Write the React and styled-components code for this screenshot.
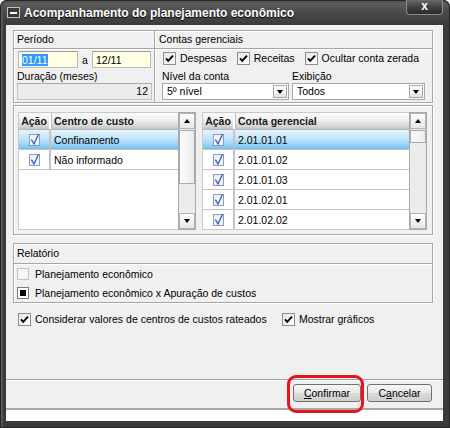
import React from 'react';
import styled, { createGlobalStyle } from 'styled-components';

const GlobalStyle = createGlobalStyle`
  html, body { margin: 0; padding: 0; background: #ffffff; }
  body {
    font-family: "Liberation Sans", Arial, sans-serif;
    font-size: 10.5px;
    color: #000;
  }
  * { box-sizing: border-box; }
`;

const Window = styled.div`
  width: 450px;
  height: 428px;
  display: flex;
  flex-direction: column;
  padding: 0 7px 7px 6px;
  border-radius: 7px 7px 0 0;
  background: linear-gradient(#666 0px, #4a4a4a 12px, #3b3b3b 25px, #3b3b3b 100%);
  box-shadow: inset 0 0 0 1px #262626, inset 1px 1px 0 2px #555;
`;

const TitleBar = styled.div`
  height: 25px;
  display: flex;
  align-items: center;
  color: #fff;
`;

const TitleIcon = styled.span`
  width: 13px;
  height: 11px;
  margin: 0 0 0 1px;
  border: 1px solid #c4c4c4;
  background: #3a3a3a;
  display: flex;
  align-items: center;
  justify-content: center;
  &::before {
    content: '';
    width: 7px;
    height: 2px;
    background: #fff;
  }
`;

const Title = styled.span`
  margin-left: 4px;
  font-size: 12px;
  font-weight: bold;
  text-shadow: 0 1px 1px #000;
`;

const CloseButton = styled.span`
  margin-left: auto;
  align-self: flex-start;
  width: 37px;
  height: 15px;
  border: 1px solid #8c8c8c;
  border-top: none;
  border-radius: 0 0 4px 4px;
  background: linear-gradient(#6a6a6a, #404040 50%, #2c2c2c);
  color: #fff;
  font-weight: bold;
  font-size: 12px;
  line-height: 12px;
  text-align: center;
`;

const Body = styled.div`
  flex: 1;
  display: flex;
  flex-direction: column;
  background: #f0f0f0;
`;

const Main = styled.div`
  flex: 1;
  padding: 5px 10px 0 7px;
  display: flex;
  flex-direction: column;
`;

const Group = styled.div`
  border: 1px solid #a6a6a6;
  box-shadow: inset 1px 1px 0 #fff, 1px 1px 0 #fff;
  margin-top: ${p => p.$top || 0}px;
  height: ${p => p.$h}px;
`;

const TopGroup = styled(Group)`
  display: grid;
  grid-template-columns: 141px 1fr;
`;

const Section = styled.div`
  display: flex;
  flex-direction: column;
  border-right: ${p => (p.$divider ? '1px solid #a6a6a6' : 'none')};
  box-shadow: ${p => (p.$divider ? '1px 0 0 #fff' : 'none')};
`;

const SectionHeader = styled.div`
  height: 18px;
  line-height: 17px;
  padding-left: ${p => p.$pad || 3}px;
  border-bottom: 1px solid #a6a6a6;
  box-shadow: 0 1px 0 #fff;
`;

const PeriodBody = styled.div`
  padding: 2px 0 0 3px;
`;

const InputRow = styled.div`
  display: flex;
  align-items: center;
  height: 17px;
  margin-left: 1px;
`;

const DateInput = styled.div`
  width: ${p => p.$w}px;
  height: 17px;
  border: 1px solid #b9b9b9;
  border-top-color: #9c9c9c;
  background: #ffffe3;
  padding: 2px 0 0 3px;
  line-height: 12px;
`;

const Selected = styled.span`
  background: #3399ff;
  color: #fff;
`;

const Sep = styled.span`
  width: 14px;
  text-align: center;
`;

const FieldLabel = styled.div`
  height: 14px;
  line-height: 14px;
  margin-top: ${p => p.$top || 0}px;
`;

const ReadOnly = styled.div`
  width: 135px;
  height: 17px;
  border: 1px solid #c2c2c2;
  border-top-color: #a8a8a8;
  background: #ebebeb;
  text-align: right;
  padding-right: 3px;
  line-height: 15px;
`;

const ContasBody = styled.div`
  padding: 3px 0 0 7px;
`;

const CheckRow = styled.div`
  display: flex;
  gap: 10px;
  height: 13px;
  padding-left: 1px;
`;

const CheckItem = styled.label`
  display: flex;
  align-items: center;
  gap: 4px;
  height: 13px;
  line-height: 13px;
  white-space: nowrap;
`;

const SelectGrid = styled.div`
  display: grid;
  grid-template-columns: 127px 133px;
  column-gap: 3px;
  margin-top: 4px;
`;

const Select = styled.div`
  position: relative;
  height: 17px;
  border: 1px solid #a9a9a9;
  background: #fff;
  padding-left: 4px;
  line-height: 15px;
`;

const DropButton = styled.span`
  position: absolute;
  right: 1px;
  top: 1px;
  width: 14px;
  height: 13px;
  border: 1px solid #a8a8a8;
  background: linear-gradient(#ffffff, #e4e4e4);
  display: flex;
  align-items: center;
  justify-content: center;
  &::before {
    content: '';
    border-left: 3.5px solid transparent;
    border-right: 3.5px solid transparent;
    border-top: 4px solid #000;
  }
`;

const TablesGroup = styled(Group)`
  display: flex;
  gap: 6px;
  padding: 6px 0 0 4px;
`;

const TableWrap = styled.div`
  width: ${p => p.$w}px;
  height: 118px;
  display: flex;
`;

const Grid = styled.div`
  flex: 1;
  background: #fff;
  border: 1px solid #c9c9c9;
  border-right: none;
  overflow: hidden;
`;

const HeaderRow = styled.div`
  display: flex;
  height: 17px;
  background: linear-gradient(#fbfbfb 0%, #eeeeee 45%, #d4d4d4 85%, #c2c2c2 100%);
  border-bottom: 1px solid #b8b8b8;
  font-weight: bold;
  color: #1a1a1a;
`;

const Row = styled.div`
  display: flex;
  height: 20px;
  border-bottom: 1px solid #c4c4c4;
  background: ${p =>
    p.$selected
      ? 'linear-gradient(#e4f3fd 0%, #c2e5fa 45%, #94d2f6 80%, #6fbef0 100%)'
      : '#fff'};
`;

const ActionCell = styled.div`
  width: 32px;
  flex: none;
  display: flex;
  align-items: center;
  justify-content: center;
  border-right: 2px solid ${p => (p.$head ? '#ffffff' : '#c4c4c4')};
  box-shadow: ${p => (p.$head ? '1px 0 0 #bdbdbd' : 'none')};
`;

const NameCell = styled.div`
  flex: 1;
  display: flex;
  align-items: center;
  padding-left: 3px;
  white-space: nowrap;
`;

const ScrollBar = styled.div`
  width: 18px;
  border: 1px solid #a9a9a9;
  background: #ececec;
  display: flex;
  flex-direction: column;
`;

const ScrollButton = styled.div`
  height: 16px;
  flex: none;
  border: 1px solid #b3b3b3;
  background: linear-gradient(#ffffff, #e6e6e6);
  display: flex;
  align-items: center;
  justify-content: center;
  margin-top: ${p => (p.$down ? 'auto' : '0')};
  &::before {
    content: '';
    border-left: 3.5px solid transparent;
    border-right: 3.5px solid transparent;
    ${p => (p.$down ? 'border-top: 4px solid #000;' : 'border-bottom: 4px solid #000;')}
  }
`;

const Thumb = styled.div`
  height: ${p => p.$h}px;
  margin-top: 1px;
  flex: none;
  border: 1px solid #a8a8a8;
  background: linear-gradient(90deg, #fdfdfd, #ebebeb);
`;

const ReportGroup = styled(Group)`
  display: flex;
  flex-direction: column;
`;

const ReportHeader = styled(SectionHeader)`
  height: 20px;
  line-height: 19px;
`;

const OptionRow = styled.div`
  height: 19px;
  display: flex;
  align-items: center;
  padding-left: 3px;
  gap: 6px;
`;

const OptionBox = styled.span`
  width: 12px;
  height: 12px;
  border: 1px solid ${p => (p.$on ? '#7a7a7a' : '#c3c3c3')};
  background: ${p => (p.$on ? '#fff' : '#f7f7f7')};
  display: flex;
  align-items: center;
  justify-content: center;
  &::before {
    content: '';
    width: 6px;
    height: 6px;
    background: ${p => (p.$on ? '#000' : 'transparent')};
  }
`;

const BottomOptions = styled.div`
  display: grid;
  grid-template-columns: 264px auto;
  margin-top: 10px;
  padding-left: 5px;
`;

const Footer = styled.div`
  height: 29px;
  border-top: 1px solid #a3a3a3;
  box-shadow: inset 0 1px 0 #fff;
  display: flex;
  justify-content: flex-end;
  align-items: flex-start;
  gap: 6px;
  padding: 4px 11px 0 0;
`;

const Highlight = styled.div`
  position: relative;
  &::after {
    content: '';
    position: absolute;
    left: -6px;
    right: -3px;
    top: -9px;
    bottom: -11px;
    border: 3px solid #e8141b;
    border-radius: 9px;
    z-index: 2;
    pointer-events: none;
  }
`;

const Button = styled.button`
  width: ${p => p.$w}px;
  height: 18px;
  padding: 0;
  border: 1px solid #707070;
  border-radius: 3px;
  background: linear-gradient(#f6f6f6, #e8e8e8 50%, #d9d9d9 51%, #cfcfcf);
  font: inherit;
  color: #000;
  & u { text-decoration: underline; }
`;

const StatusBar = styled.div`
  height: 13px;
  border-top: 2px solid #a9a9a9;
  background: #fff;
`;

const Check = () => (
  <svg width="13" height="13" viewBox="0 0 13 13">
    <defs>
      <linearGradient id="cb" x1="0" y1="0" x2="1" y2="1">
        <stop offset="0" stopColor="#e6e6e6" />
        <stop offset="1" stopColor="#ffffff" />
      </linearGradient>
    </defs>
    <rect x="0.5" y="0.5" width="12" height="12" fill="url(#cb)" stroke="#8e8f8f" />
    <path d="M3 6.3 L5.2 8.8 L10 3.6" fill="none" stroke="#000" strokeWidth="1.9" />
  </svg>
);

const GridCheck = () => (
  <svg width="13" height="13" viewBox="0 0 13 13">
    <rect x="1.5" y="1.5" width="10" height="11" fill="#eef2fa" stroke="#8c9cbf" />
    <path d="M3.4 6.6 L6 11 L10.6 1.2" fill="none" stroke="#3550c2" strokeWidth="1.2" />
  </svg>
);

const DataTable = ({ width, title, rows, thumb }) => (
  <TableWrap $w={width}>
    <Grid>
      <HeaderRow>
        <ActionCell $head>Ação</ActionCell>
        <NameCell>{title}</NameCell>
      </HeaderRow>
      {rows.map((r, i) => (
        <Row key={r} $selected={i === 0}>
          <ActionCell>
            <GridCheck />
          </ActionCell>
          <NameCell>{r}</NameCell>
        </Row>
      ))}
    </Grid>
    <ScrollBar>
      <ScrollButton />
      <Thumb $h={thumb} />
      <ScrollButton $down />
    </ScrollBar>
  </TableWrap>
);

const App = () => (
  <>
    <GlobalStyle />
    <Window>
      <TitleBar>
        <TitleIcon />
        <Title>Acompanhamento do planejamento econômico</Title>
        <CloseButton>x</CloseButton>
      </TitleBar>
      <Body>
        <Main>
          <TopGroup $top={0} $h={73}>
            <Section $divider>
              <SectionHeader>Período</SectionHeader>
              <PeriodBody>
                <InputRow>
                  <DateInput $w={60}><Selected>01/11</Selected></DateInput>
                  <Sep>a</Sep>
                  <DateInput $w={59}>12/11</DateInput>
                </InputRow>
                <FieldLabel $top={1}>Duração (meses)</FieldLabel>
                <ReadOnly>12</ReadOnly>
              </PeriodBody>
            </Section>
            <Section>
              <SectionHeader $pad={4}>Contas gerenciais</SectionHeader>
              <ContasBody>
                <CheckRow>
                  <CheckItem><Check />Despesas</CheckItem>
                  <CheckItem><Check />Receitas</CheckItem>
                  <CheckItem><Check />Ocultar conta zerada</CheckItem>
                </CheckRow>
                <SelectGrid>
                  <div>
                    <FieldLabel>Nível da conta</FieldLabel>
                    <Select>5º nível<DropButton /></Select>
                  </div>
                  <div>
                    <FieldLabel>Exibição</FieldLabel>
                    <Select>Todos<DropButton /></Select>
                  </div>
                </SelectGrid>
              </ContasBody>
            </Section>
          </TopGroup>

          <TablesGroup $top={2} $h={130}>
            <DataTable
              width={178}
              title="Centro de custo"
              rows={['Confinamento', 'Não informado']}
              thumb={54}
            />
            <DataTable
              width={225}
              title="Conta gerencial"
              rows={['2.01.01.01', '2.01.01.02', '2.01.01.03', '2.01.02.01', '2.01.02.02']}
              thumb={13}
            />
          </TablesGroup>

          <ReportGroup $top={8} $h={60}>
            <ReportHeader>Relatório</ReportHeader>
            <OptionRow>
              <OptionBox />
              Planejamento econômico
            </OptionRow>
            <OptionRow>
              <OptionBox $on />
              Planejamento econômico x Apuração de custos
            </OptionRow>
          </ReportGroup>

          <BottomOptions>
            <CheckItem><Check />Considerar valores de centros de custos rateados</CheckItem>
            <CheckItem><Check />Mostrar gráficos</CheckItem>
          </BottomOptions>
        </Main>

        <Footer>
          <Highlight>
            <Button $w={68}><u>C</u>onfirmar</Button>
          </Highlight>
          <Button $w={65}>C<u>a</u>ncelar</Button>
        </Footer>
        <StatusBar />
      </Body>
    </Window>
  </>
);

export default App;
